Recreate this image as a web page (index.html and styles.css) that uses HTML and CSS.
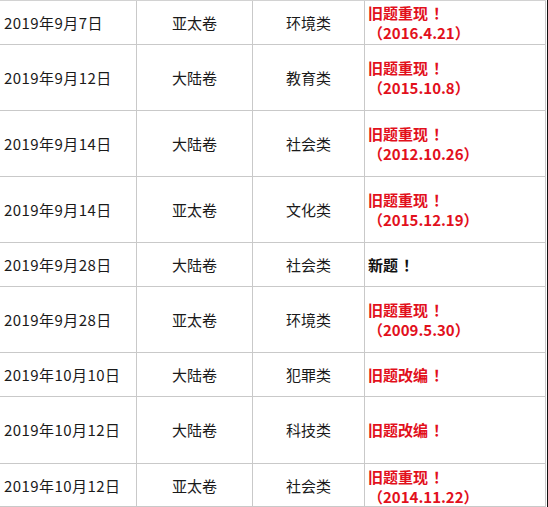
FILE: index.html
```html
<!DOCTYPE html>
<html lang="zh-CN">
<head>
<meta charset="utf-8">
<title>题目回顾</title>
<link rel="stylesheet" href="styles.css">
</head>
<body>
<div class="sheet">
  <div class="row h44">
    <div class="cell date">2019年9月7日</div>
    <div class="cell mid">亚太卷</div>
    <div class="cell mid">环境类</div>
    <div class="cell note red"><span class="txt">旧题重现<span class="bang">！</span><br>（2016.4.21）</span></div>
  </div>
  <div class="row h66">
    <div class="cell date">2019年9月12日</div>
    <div class="cell mid">大陆卷</div>
    <div class="cell mid">教育类</div>
    <div class="cell note red"><span class="txt">旧题重现<span class="bang">！</span><br>（2015.10.8）</span></div>
  </div>
  <div class="row h66">
    <div class="cell date">2019年9月14日</div>
    <div class="cell mid">大陆卷</div>
    <div class="cell mid">社会类</div>
    <div class="cell note red"><span class="txt">旧题重现<span class="bang">！</span><br>（2012.10.26）</span></div>
  </div>
  <div class="row h66">
    <div class="cell date">2019年9月14日</div>
    <div class="cell mid">亚太卷</div>
    <div class="cell mid">文化类</div>
    <div class="cell note red"><span class="txt">旧题重现<span class="bang">！</span><br>（2015.12.19）</span></div>
  </div>
  <div class="row h44">
    <div class="cell date">2019年9月28日</div>
    <div class="cell mid">大陆卷</div>
    <div class="cell mid">社会类</div>
    <div class="cell note"><span class="txt">新题<span class="bang">！</span></span></div>
  </div>
  <div class="row h66">
    <div class="cell date">2019年9月28日</div>
    <div class="cell mid">亚太卷</div>
    <div class="cell mid">环境类</div>
    <div class="cell note red"><span class="txt">旧题重现<span class="bang">！</span><br>（2009.5.30）</span></div>
  </div>
  <div class="row h44">
    <div class="cell date">2019年10月10日</div>
    <div class="cell mid">大陆卷</div>
    <div class="cell mid">犯罪类</div>
    <div class="cell note red"><span class="txt">旧题改编<span class="bang">！</span></span></div>
  </div>
  <div class="row h67">
    <div class="cell date">2019年10月12日</div>
    <div class="cell mid">大陆卷</div>
    <div class="cell mid">科技类</div>
    <div class="cell note red"><span class="txt">旧题改编<span class="bang">！</span></span></div>
  </div>
  <div class="row h43">
    <div class="cell date">2019年10月12日</div>
    <div class="cell mid">亚太卷</div>
    <div class="cell mid">社会类</div>
    <div class="cell note red low"><span class="txt">旧题重现<span class="bang">！</span><br>（2014.11.22）</span></div>
  </div>
</div>
</body>
</html>
```

FILE: styles.css
```css
html, body {
  margin: 0;
  padding: 0;
  background: #ffffff;
}

body {
  width: 548px;
  height: 507px;
  box-sizing: border-box;
  border-right: 1px solid #111111;
  overflow: hidden;
  font-family: "Noto Sans CJK SC", "Noto Sans", sans-serif;
  font-size: 15px;
  line-height: 20px;
  color: #1a1a1a;
}

.sheet {
  width: 546px;
  border-top: 1px solid #d2d2d2;
}

.row {
  display: grid;
  grid-template-columns: 137px 116px 112px 181px;
  box-sizing: border-box;
  border-bottom: 1px solid #c9c9c9;
}

.h43 { height: 43px; }
.h44 { height: 44px; }
.h66 { height: 66px; }
.h67 { height: 67px; }

.cell {
  display: flex;
  align-items: center;
  border-right: 1px solid #c9c9c9;
  white-space: nowrap;
}

.date {
  padding-left: 4px;
  letter-spacing: 0.45px;
}

.mid {
  justify-content: center;
}

.note {
  padding-left: 3px;
  font-weight: bold;
  color: #111111;
}

.red {
  color: #e2101c;
}

.low {
  padding-top: 3px;
}

.bang {
  padding-left: 5px;
}
```
